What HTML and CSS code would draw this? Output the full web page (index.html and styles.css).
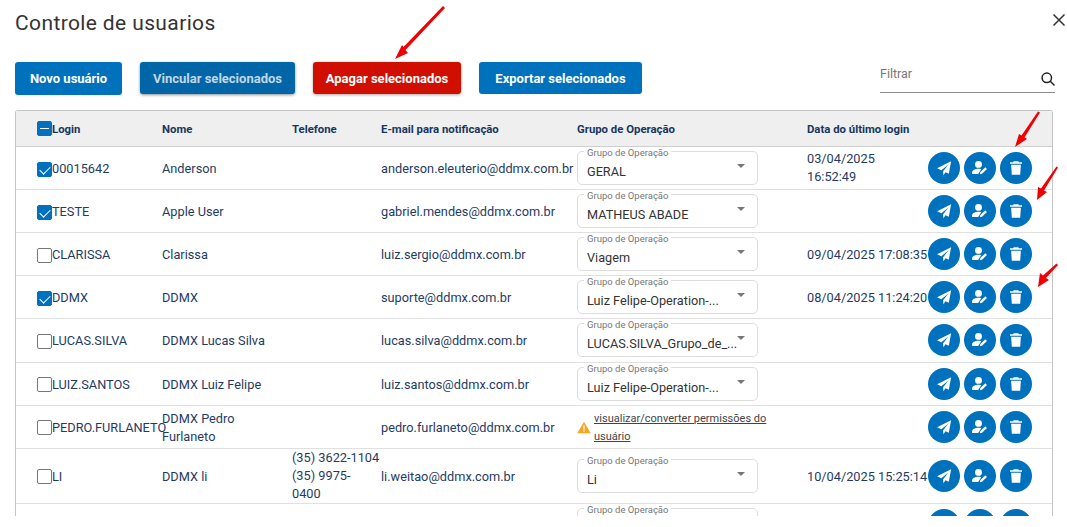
FILE: index.html
```html
<!DOCTYPE html>
<html lang="pt-BR">
<head>
<meta charset="utf-8">
<title>Controle de usuarios</title>
<link rel="stylesheet" href="styles.css">
</head>
<body>
<svg class="defs" width="0" height="0" aria-hidden="true">
  <defs>
    <symbol id="i-send" viewBox="0 0 24 24"><path d="M21.500 3 2.800 12.400l5.600 2.500L18 7.400l-7.200 8.800 .3 5.300 3-4 4.300 2z"/></symbol>
    <symbol id="i-user" viewBox="0 0 24 24"><circle cx="10" cy="7.200" r="4.600"/><path d="M1.500 20v-2.400C1.500 14.600 6 13 10 13c1.300 0 2.600.2 3.700.5L9.500 20z"/><path d="m11.800 20.200 .7-2.800 6.600-6.400 2.200 2.200-6.600 6.400z"/></symbol>
    <symbol id="i-trash" viewBox="0 0 24 24"><path d="M9 3h6l1 1.200h4v2.100H4V4.200h4zM5.500 7.800h13L17.600 21H6.400z"/></symbol>
  </defs>
</svg>
<main class="modal">
  <header class="title-row">
    <h1 class="title">Controle de usuarios</h1>
    <svg class="close" viewBox="0 0 14 14"><path d="M1.500 1.500l11 11M12.500 1.500l-11 11"/></svg>
  </header>
  <div class="toolbar">
    <button class="btn btn-new">Novo usuário</button>
    <button class="btn btn-muted">Vincular selecionados</button>
    <button class="btn btn-danger">Apagar selecionados</button>
    <button class="btn btn-export">Exportar selecionados</button>
    <div class="filter">
      <span class="filter-label">Filtrar</span>
      <svg class="search" viewBox="0 0 16 16"><circle cx="6.800" cy="6.800" r="4.700"/><path d="m10.300 10.300 4.200 4.200"/></svg>
    </div>
  </div>
  <section class="table">
    <div class="row head">
      <div class="c-login"><span class="cb minus"></span>Login</div>
      <div>Nome</div><div>Telefone</div><div>E-mail para notificação</div><div>Grupo de Operação</div><div>Data do último login</div><div></div>
    </div>
    <div class="row">
      <div class="c-login"><span class="cb on"></span>00015642</div><div>Anderson</div><div></div><div>anderson.eleuterio@ddmx.com.br</div>
      <div><div class="select"><span class="legend">Grupo de Operação</span><span class="value">GERAL</span><span class="caret"></span></div></div>
      <div class="multi">03/04/2025<br>16:52:49</div>
      <div class="actions"><span class="act"><svg><use href="#i-send"/></svg></span><span class="act"><svg><use href="#i-user"/></svg></span><span class="act"><svg><use href="#i-trash"/></svg></span></div>
    </div>
    <div class="row">
      <div class="c-login"><span class="cb on"></span>TESTE</div><div>Apple User</div><div></div><div>gabriel.mendes@ddmx.com.br</div>
      <div><div class="select"><span class="legend">Grupo de Operação</span><span class="value">MATHEUS ABADE</span><span class="caret"></span></div></div>
      <div></div>
      <div class="actions"><span class="act"><svg><use href="#i-send"/></svg></span><span class="act"><svg><use href="#i-user"/></svg></span><span class="act"><svg><use href="#i-trash"/></svg></span></div>
    </div>
    <div class="row">
      <div class="c-login"><span class="cb"></span>CLARISSA</div><div>Clarissa</div><div></div><div>luiz.sergio@ddmx.com.br</div>
      <div><div class="select"><span class="legend">Grupo de Operação</span><span class="value">Viagem</span><span class="caret"></span></div></div>
      <div class="date">09/04/2025 17:08:35</div>
      <div class="actions"><span class="act"><svg><use href="#i-send"/></svg></span><span class="act"><svg><use href="#i-user"/></svg></span><span class="act"><svg><use href="#i-trash"/></svg></span></div>
    </div>
    <div class="row">
      <div class="c-login"><span class="cb on"></span>DDMX</div><div>DDMX</div><div></div><div>suporte@ddmx.com.br</div>
      <div><div class="select"><span class="legend">Grupo de Operação</span><span class="value">Luiz Felipe-Operation-...</span><span class="caret"></span></div></div>
      <div class="date">08/04/2025 11:24:20</div>
      <div class="actions"><span class="act"><svg><use href="#i-send"/></svg></span><span class="act"><svg><use href="#i-user"/></svg></span><span class="act"><svg><use href="#i-trash"/></svg></span></div>
    </div>
    <div class="row">
      <div class="c-login"><span class="cb"></span>LUCAS.SILVA</div><div>DDMX Lucas Silva</div><div></div><div>lucas.silva@ddmx.com.br</div>
      <div><div class="select"><span class="legend">Grupo de Operação</span><span class="value">LUCAS.SILVA_Grupo_de_...</span><span class="caret"></span></div></div>
      <div></div>
      <div class="actions"><span class="act"><svg><use href="#i-send"/></svg></span><span class="act"><svg><use href="#i-user"/></svg></span><span class="act"><svg><use href="#i-trash"/></svg></span></div>
    </div>
    <div class="row">
      <div class="c-login"><span class="cb"></span>LUIZ.SANTOS</div><div>DDMX Luiz Felipe</div><div></div><div>luiz.santos@ddmx.com.br</div>
      <div><div class="select"><span class="legend">Grupo de Operação</span><span class="value">Luiz Felipe-Operation-...</span><span class="caret"></span></div></div>
      <div></div>
      <div class="actions"><span class="act"><svg><use href="#i-send"/></svg></span><span class="act"><svg><use href="#i-user"/></svg></span><span class="act"><svg><use href="#i-trash"/></svg></span></div>
    </div>
    <div class="row">
      <div class="c-login"><span class="cb"></span>PEDRO.FURLANETO</div><div>DDMX Pedro<br>Furlaneto</div><div></div><div>pedro.furlaneto@ddmx.com.br</div>
      <div class="warn-cell"><svg class="warn" viewBox="0 0 16 14"><path d="M8 .5 15.700 13.500H.300z"/><path class="warn-mark" d="M7.200 4.800h1.600v4.600H7.200zM7.200 10.300h1.600v1.600H7.200z"/></svg><a class="link">visualizar/converter permissões do usuário</a></div>
      <div></div>
      <div class="actions"><span class="act"><svg><use href="#i-send"/></svg></span><span class="act"><svg><use href="#i-user"/></svg></span><span class="act"><svg><use href="#i-trash"/></svg></span></div>
    </div>
    <div class="row">
      <div class="c-login"><span class="cb"></span>LI</div><div>DDMX li</div><div class="multi">(35) 3622-1104<br>(35) 9975-<br>0400</div><div>li.weitao@ddmx.com.br</div>
      <div><div class="select"><span class="legend">Grupo de Operação</span><span class="value">Li</span><span class="caret"></span></div></div>
      <div class="date">10/04/2025 15:25:14</div>
      <div class="actions"><span class="act"><svg><use href="#i-send"/></svg></span><span class="act"><svg><use href="#i-user"/></svg></span><span class="act"><svg><use href="#i-trash"/></svg></span></div>
    </div>
    <div class="row">
      <div class="c-login"></div><div></div><div></div><div></div>
      <div><div class="select"><span class="legend">Grupo de Operação</span></div></div>
      <div></div>
      <div class="actions"><span class="act"></span><span class="act"></span><span class="act"></span></div>
    </div>
  </section>
</main>
<svg class="arrows" viewBox="0 0 1067 527" aria-hidden="true">
  <polygon points="443,6 445,8 405.500,50 408,53 395,59 402,45 403.500,47"/>
  <polygon points="1038,111.500 1040,112.500 1024.500,137.500 1027,139 1015,147 1019,134 1021.500,135.500"/>
  <polygon points="1056.500,166.500 1058,167.500 1044,190.500 1047,192 1037,200 1038,187 1041,188.500"/>
  <polygon points="1056.500,263.500 1058,265 1046,278 1049,280 1038,287 1040,273 1043,275.500"/>
</svg>
</body>
</html>
```
FILE: styles.css
```css
* { box-sizing: border-box; }
html, body { margin: 0; height: 527px; overflow: hidden; background: #fff; }
body { font-family: Roboto, sans-serif; color: #1f3b63; position: relative; }
.defs { position: absolute; }
.modal { height: 516px; padding: 0 14px 0 15px; overflow: hidden; }
.title-row { display: flex; justify-content: space-between; align-items: center; height: 46px; }
.title { margin: 0; font-size: 21px; font-weight: 400; color: #333; letter-spacing: .38px; }
.close { width: 14px; height: 14px; margin-top: -6px; fill: none; stroke: #333; stroke-width: 1.500; position: relative; left: 13px; }
.toolbar { display: flex; align-items: flex-start; gap: 18px; height: 64px; padding-top: 16px; }
.btn { height: 33px; border: 0; border-radius: 3px; background: #0071bc; color: #fff; font: 700 13px Roboto, sans-serif; padding: 0; white-space: nowrap; }
.btn-new { width: 107px; }
.btn-export { width: 163px; height: 32px; }
.btn-muted { background: #0066a8; color: #c5d6e4; box-shadow: 0 1px 3px rgba(0,0,0,.45); width: 155px; height: 32px; }
.btn-danger { background: #d10f00; box-shadow: 0 1px 3px rgba(0,0,0,.35); width: 148px; height: 32px; }
.filter { margin-left: auto; width: 175px; height: 32px; margin-top: -1px; margin-right: -2px; border-bottom: 1px solid #8a8a8a; display: flex; justify-content: space-between; align-items: flex-start; color: #777; font-size: 12.500px; }
.filter-label { padding-top: 5px; }
.search { width: 16px; height: 16px; margin-top: 10px; margin-right: -1px; fill: none; stroke: #222; stroke-width: 1.500; }
.table { border: 1px solid #c4c4c4; border-bottom: 0; border-radius: 3px 3px 0 0; font-size: 12.750px; }
.row { display: grid; grid-template-columns: 146px 130px 89px 196px 230px 121px 1fr; min-height: 43.110px; align-items: center; border-bottom: 1px solid #e0e0e0; line-height: 18px; }
.row > div { padding-top: 2px; }
.row > .actions, .row > .multi, .row.head > div { padding-top: 0; }
.row > div:first-child { padding-left: 21px; }
.head { height: 36px; min-height: 36px; background: #efefef; font-weight: 700; font-size: 11.350px; line-height: 16px; color: #17365f; border-bottom-color: #cfcfcf; }
.c-login { display: flex; align-items: center; }
.date { white-space: nowrap; }
.cb { width: 15px; height: 15px; flex: none; border: 1px solid #777; border-radius: 2px; position: relative; background: #fff; }
.cb.on, .cb.minus { background: #0071bc; border-color: #0071bc; }
.cb.on::after { content: ""; position: absolute; left: 4px; top: 1px; width: 5px; height: 9px; border: solid #fff; border-width: 0 1px 1px 0; transform: rotate(45deg); }
.cb.minus::after { content: ""; position: absolute; left: 2px; right: 2px; top: 6px; height: 1px; background: #fff; }
.select { position: relative; width: 181px; height: 34px; border: 1px solid #ddd; border-radius: 5px; padding: 11px 9px 0; margin-top: -2px; color: #333; }
.legend { position: absolute; left: 6px; top: -5px; padding: 0 3px; background: #fff; font-size: 9.500px; line-height: 11px; color: #777; white-space: nowrap; }
.value { font-size: 12.700px; white-space: nowrap; }
.caret { position: absolute; right: 12px; top: 12px; border: 4px solid transparent; border-top: 4px solid #777; border-left-width: 4.500px; border-right-width: 4.500px; }
.actions { display: flex; gap: 4px; }
.act { width: 32px; height: 32px; border-radius: 50%; background: #0071bc; display: flex; align-items: center; justify-content: center; flex: none; }
.act svg { width: 18px; height: 18px; fill: #fff; }
.warn-cell { display: flex; align-items: center; gap: 3px; }
.warn { width: 14px; height: 13px; flex: none; fill: #f5a623; }
.warn-mark { fill: #fff; }
.link { font-size: 11px; color: #444; text-decoration: underline; width: 180px; }
.arrows { position: absolute; inset: 0; width: 1067px; height: 527px; pointer-events: none; fill: #f00000; }
```
